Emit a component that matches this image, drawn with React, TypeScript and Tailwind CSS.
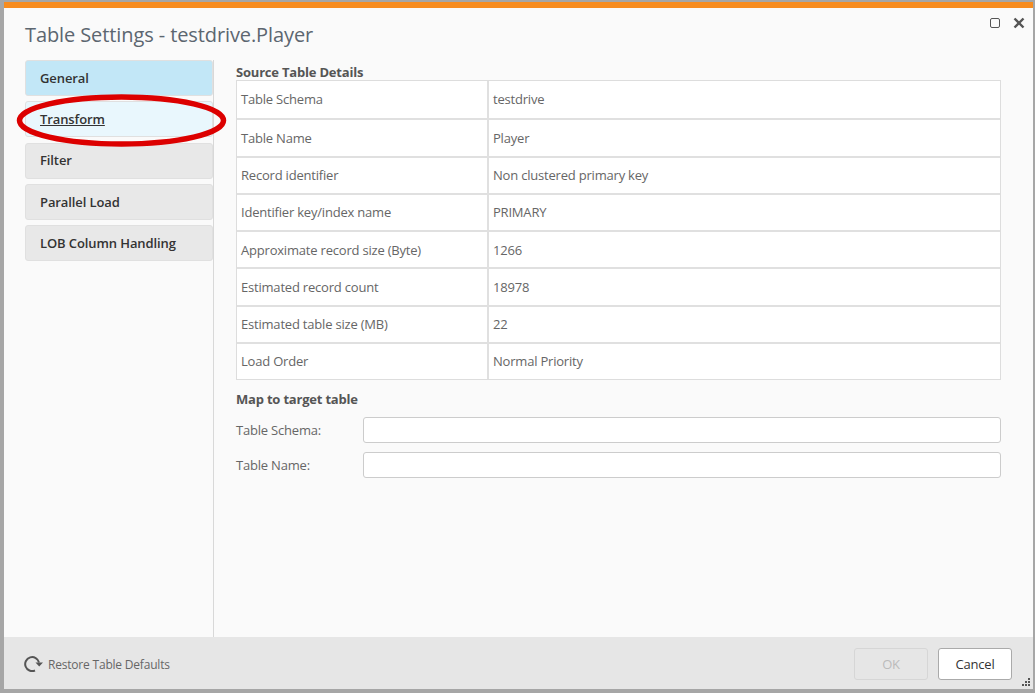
const navItems = [
  { label: "General", className: "bg-[#c2e7f7] text-[#333]" },
  { label: "Transform", className: "bg-[#e9f7fd] text-[#333] underline" },
  { label: "Filter", className: "bg-[#e8e8e8] text-[#333]" },
  { label: "Parallel Load", className: "bg-[#e8e8e8] text-[#333]" },
  { label: "LOB Column Handling", className: "bg-[#e8e8e8] text-[#333]" },
];

const details = [
  ["Table Schema", "testdrive"],
  ["Table Name", "Player"],
  ["Record identifier", "Non clustered primary key"],
  ["Identifier key/index name", "PRIMARY"],
  ["Approximate record size (Byte)", "1266"],
  ["Estimated record count", "18978"],
  ["Estimated table size (MB)", "22"],
  ["Load Order", "Normal Priority"],
];

function TargetField({ label }: { label: string }) {
  return (
    <div className="flex items-center h-[26px]">
      <label className="w-[127px] text-[#666]">{label}</label>
      <input className="w-[638px] h-[26px] bg-white border border-[#ccc] rounded-[3px]" />
    </div>
  );
}

export default function App() {
  return (
    <div
      className="relative w-[1035px] h-[693px] overflow-hidden bg-[#a6a6a6] pt-[2px] pl-[4px] pr-[2px] pb-[4px] text-[13px] tracking-[-0.2px]"
      style={{ fontFamily: '"Open Sans", "Noto Sans", sans-serif' }}
    >
      <div className="flex flex-col h-full bg-[#fafafa] border-t-[6px] border-[#f78c1f]">
        <div className="relative h-[52px] shrink-0 pl-[21px] pt-[12px] text-[20px] tracking-[-0.1px] text-[#5c6670]">
          Table Settings - testdrive.Player
          <div className="absolute right-[33px] top-[10px] w-[10px] h-[10px] border-[1.5px] border-[#555] rounded-[2px]" />
          <svg className="absolute right-[8px] top-[9px]" width="12" height="12" viewBox="0 0 12 12">
            <path d="M1.5 1.5 L10.5 10.5 M10.5 1.5 L1.5 10.5" stroke="#555" strokeWidth="2.4" />
          </svg>
        </div>

        <div className="flex flex-1 min-h-0">
          <div className="w-[210px] shrink-0 border-r border-[#d8d8d8] pl-[21px] flex flex-col gap-[5.25px]">
            {navItems.map((item) => (
              <div
                key={item.label}
                className={`h-[36px] flex items-center pl-[14px] pt-[1px] rounded-[3px] font-semibold tracking-[-0.1px] border border-[#e0e0e0] ${item.className}`}
              >
                {item.label}
              </div>
            ))}
          </div>

          <div className="flex-1 pl-[22px] pr-[32px]">
            <div className="h-[20px] font-bold text-[#555] leading-[24px]">Source Table Details</div>
            <div className="w-[765px] bg-white border border-[#ddd]">
              {details.map(([name, value], idx) => (
                <div
                  key={name}
                  className={`flex h-[37.3px] items-center text-[#666] ${idx > 0 ? "border-t-2 border-[#e0e0e0]" : ""}`}
                >
                  <div className="w-[252px] h-full flex items-center pl-[4px] pt-[1px] border-r-2 border-[#e0e0e0]">{name}</div>
                  <div className="pl-[4px] pt-[1px]">{value}</div>
                </div>
              ))}
            </div>
            <div className="mt-[10px] h-[22px] font-bold text-[#555]">Map to target table</div>
            <div className="mt-[5px] flex flex-col gap-[9px]">
              <TargetField label="Table Schema:" />
              <TargetField label="Table Name:" />
            </div>
          </div>
        </div>

        <div className="relative h-[52px] shrink-0 bg-[#e6e6e6] flex items-center justify-between pl-[20px] pr-[21px] pt-[2px]">
          <div className="flex items-center gap-[4px] text-[12px] text-[#666]">
            <svg width="20" height="20" viewBox="0 0 20 20" fill="none">
              <path d="M15 8.5 A7 7 0 1 0 11 16.5" stroke="#555" strokeWidth="2" />
              <path d="M11.5 8.5 L19 8.5 L15.2 12.5 Z" fill="#555" />
            </svg>
            <span className="pt-[2px]">Restore Table Defaults</span>
          </div>
          <div className="flex gap-[10px]">
            <button className="w-[74px] h-[32px] pt-[2px] border border-[#d6d6d6] rounded-[3px] text-[#bbb]">OK</button>
            <button className="w-[74px] h-[32px] pt-[2px] bg-white border border-[#aaa] rounded-[3px] text-[#333]">Cancel</button>
          </div>
          <svg className="absolute right-[2px] bottom-[2px]" width="10" height="10" viewBox="0 0 10 10" fill="#555">
            <rect x="7" y="1" width="2" height="2" />
            <rect x="4" y="4" width="2" height="2" />
            <rect x="7" y="4" width="2" height="2" />
            <rect x="1" y="7" width="2" height="2" />
            <rect x="4" y="7" width="2" height="2" />
            <rect x="7" y="7" width="2" height="2" />
          </svg>
        </div>
      </div>

      <svg className="absolute left-[15px] top-[93px]" width="213" height="55" viewBox="0 0 213 55" fill="none">
        <ellipse cx="106.5" cy="27.5" rx="102" ry="23.5" stroke="#dc0000" strokeWidth="5.5" />
      </svg>
    </div>
  );
}
